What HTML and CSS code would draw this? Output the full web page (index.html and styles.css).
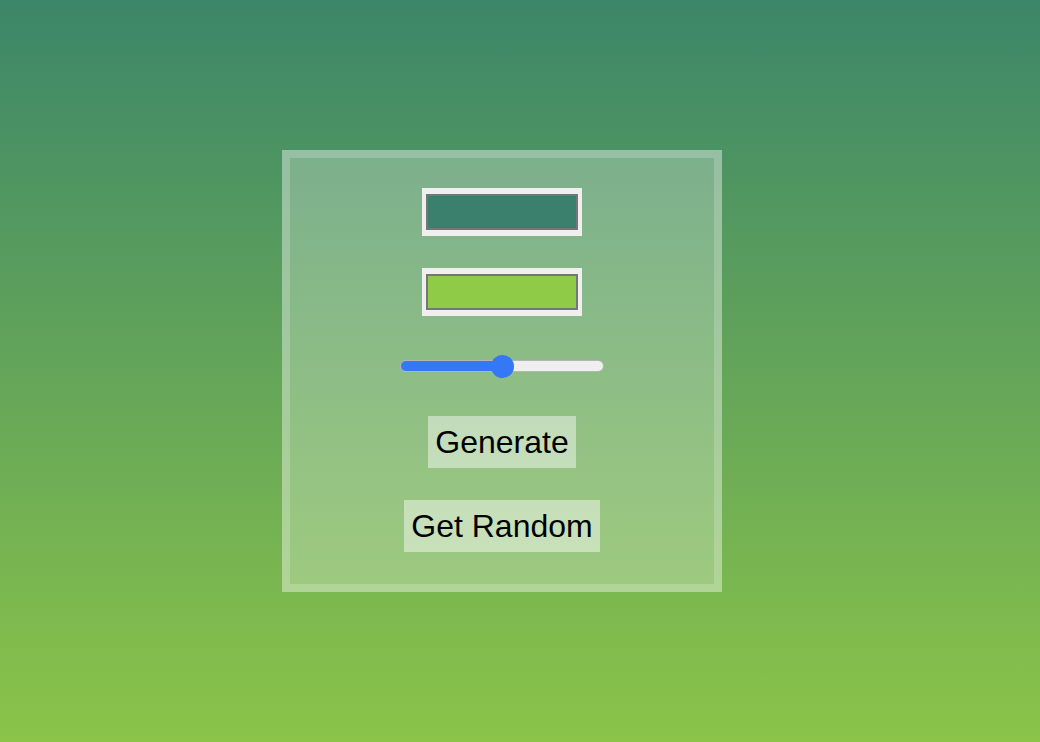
FILE: index.html
```html
<!DOCTYPE html>
<html lang="en">
<head>
<meta charset="utf-8">
<title>Gradient Generator</title>
<link rel="stylesheet" href="styles.css">
</head>
<body>
  <main class="card">
    <input class="color-input" type="color" value="#3a806d" aria-label="Color 1">
    <input class="color-input" type="color" value="#8fcb46" aria-label="Color 2">
    <input class="slider" type="range" min="0" max="100" value="50" aria-label="Mix">
    <button class="btn" type="button">Generate</button>
    <button class="btn" type="button">Get Random</button>
  </main>
</body>
</html>
```

FILE: styles.css
```css
html, body {
  margin: 0;
  padding: 0;
}

body {
  width: 1040px;
  height: 742px;
  overflow: hidden;
  background: linear-gradient(to bottom, #3c8669, #8bc449);
  font-family: "Liberation Sans", Arial, Helvetica, sans-serif;
}

.card {
  box-sizing: border-box;
  width: 440px;
  height: 442px;
  margin: 150px 0 0 282px;
  padding: 30px 0 32px;
  border: 8px solid rgba(255, 255, 255, 0.2);
  background: rgba(255, 255, 255, 0.27);
  display: flex;
  flex-direction: column;
  align-items: center;
  gap: 32px;
}

.color-input {
  -webkit-appearance: none;
  appearance: none;
  box-sizing: border-box;
  width: 160px;
  height: 48px;
  margin: 0;
  padding: 0;
  border: none;
  background: #efefef;
  cursor: pointer;
  flex: none;
}

.color-input::-webkit-color-swatch-wrapper {
  padding: 6px 4px;
}

.color-input::-webkit-color-swatch {
  border: 2px solid #767676;
  border-radius: 0;
}

.slider {
  -webkit-appearance: none;
  appearance: none;
  box-sizing: border-box;
  width: 204px;
  height: 12px;
  margin: 12px 0;
  padding: 0;
  border-radius: 6px;
  border: 1px solid #b5b5b5;
  background: linear-gradient(to right, #3478f6 50%, #efefef 50%);
  outline: none;
  flex: none;
}

.slider::-webkit-slider-thumb {
  -webkit-appearance: none;
  appearance: none;
  width: 23px;
  height: 23px;
  border-radius: 50%;
  background: #3478f6;
  border: none;
}

.btn {
  margin: 0;
  padding: 7px 7px;
  border: none;
  border-radius: 0;
  background: rgba(255, 255, 255, 0.45);
  color: #000;
  font-family: "Liberation Sans", Arial, Helvetica, sans-serif;
  font-size: 32px;
  line-height: 38px;
  cursor: pointer;
  flex: none;
}
```
